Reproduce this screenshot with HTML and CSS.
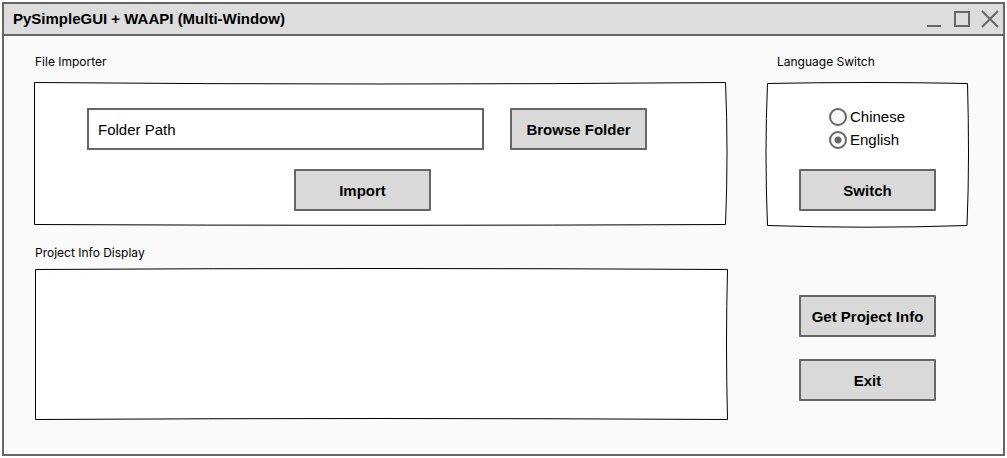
FILE: index.html
```html
<!DOCTYPE html>
<html lang="en">
<head>
<meta charset="utf-8">
<meta name="viewport" content="width=device-width, initial-scale=1">
<title>PySimpleGUI + WAAPI (Multi-Window)</title>
<link rel="stylesheet" href="styles.css">
</head>
<body>
<main class="window">
  <header class="titlebar">
    <h1 class="title">PySimpleGUI + WAAPI (Multi-Window)</h1>
    <div class="controls">
      <button class="control" type="button" aria-label="Minimize"><svg viewBox="0 0 18 18"><path d="M2 16H16"/></svg></button>
      <button class="control" type="button" aria-label="Maximize"><svg viewBox="0 0 18 18"><path d="M2 2H16V16H2Z"/></svg></button>
      <button class="control" type="button" aria-label="Close"><svg viewBox="0 0 18 18"><path d="M1 1L17 17M17 1L1 17"/></svg></button>
    </div>
  </header>
  <div class="content">
    <section class="group">
      <h2 class="label">File Importer</h2>
      <form class="panel importer">
        <svg class="outline" viewBox="0 0 694 143" preserveAspectRatio="none" aria-hidden="true"><path d="M.5 .5Q173 2 346 2Q519 2 691.5 .5Q693 35 693 71Q693 107 691.5 142.5Q519 143.3 346 143.3Q173 143.3 .5 142.5Z"/></svg>
        <div class="row">
          <input class="path" type="text" value="Folder Path" aria-label="Folder Path">
          <button class="button" type="button">Browse Folder</button>
        </div>
        <div class="row row-center">
          <button class="button" type="button">Import</button>
        </div>
      </form>
    </section>
    <section class="group">
      <h2 class="label label-indent">Language Switch</h2>
      <form class="panel language">
        <svg class="outline" viewBox="0 0 202 143" preserveAspectRatio="none" aria-hidden="true"><path d="M1.5 1.5Q51 .5 101 .5Q151 .5 201.5 1.5Q202.5 36 202.5 72Q202.5 108 201 143.5Q151 145.2 101 145.2Q51 145.2 1.5 143.5Q0 108 0 72Q0 36 1.5 1.5Z"/></svg>
        <div class="options">
          <label class="option"><input class="radio" type="radio" name="language">Chinese</label>
          <label class="option"><input class="radio" type="radio" name="language" checked>English</label>
        </div>
        <button class="button" type="button">Switch</button>
      </form>
    </section>
    <section class="group">
      <h2 class="label label-tight">Project Info Display</h2>
      <div class="panel display">
        <svg class="outline" viewBox="0 0 694 152" preserveAspectRatio="none" aria-hidden="true"><path d="M1.5 1.5Q174 .5 347 .5Q520 .5 693.5 1.5Q692.5 38 692.5 76Q692.5 114 693.5 151.5Q520 150.5 347 150.5Q174 150.5 1.5 151.5Z"/></svg>
      </div>
    </section>
    <div class="actions">
      <button class="button" type="button">Get Project Info</button>
      <button class="button" type="button">Exit</button>
    </div>
  </div>
</main>
</body>
</html>
```
FILE: styles.css
```css
* { box-sizing: border-box; }

body {
  margin: 0;
  padding: 2px;
  min-height: 100vh;
  display: flex;
  background: #fff;
  color: #000;
  font: 15px/20px "Liberation Sans", Arial, sans-serif;
}

.window {
  flex: 1;
  display: flex;
  flex-direction: column;
  border: 2px solid #666;
  background: #fafafa;
}

.titlebar {
  display: flex;
  align-items: center;
  justify-content: space-between;
  height: 32px;
  padding: 0 4px 0 9px;
  border-bottom: 2px solid #666;
  background: #ddd;
}

.title {
  margin: 0;
  font-size: 15px;
  line-height: 20px;
}

.controls {
  display: flex;
  gap: 10px;
}

.control {
  width: 18px;
  height: 18px;
  padding: 0;
  border: 0;
  background: none;
}

.control svg {
  display: block;
  fill: none;
  stroke: #666;
  stroke-width: 2;
}

.content {
  flex: 1;
  display: grid;
  grid-template-columns: minmax(0, 1fr) 202px;
  grid-template-rows: auto 1fr;
  gap: 18px 38px;
  padding: 16px 35px 34px 30px;
}

.group {
  display: flex;
  flex-direction: column;
}

.label {
  margin: 0 0 10px 1px;
  font: 400 12px/20px Inter, sans-serif;
}

.label-indent { margin-left: 11px; }

.label-tight { margin-bottom: 5px; }

.panel {
  position: relative;
  flex: 1;
}

.outline {
  position: absolute;
  inset: 0;
  z-index: 0;
  width: 100%;
  height: 100%;
  overflow: visible;
  fill: #fff;
  stroke: #000;
}

.outline path { vector-effect: non-scaling-stroke; }

.row,
.options,
.language .button { position: relative; }

.importer {
  display: flex;
  flex-direction: column;
  gap: 19px;
  padding: 26px 81px 14px 53px;
}

.row {
  display: flex;
  gap: 26px;
}

.row-center {
  justify-content: center;
  padding-right: 9px;
}

.path {
  flex: 1;
  min-width: 0;
  height: 42px;
  padding: 0 9px;
  border: 2px solid #666;
  background: #fff;
  color: #000;
  font: inherit;
}

.button {
  width: 137px;
  height: 42px;
  padding: 2px 0 0;
  border: 2px solid #666;
  border-radius: 1px;
  background: #d9d9d9;
  color: #000;
  font: inherit;
  font-weight: 700;
}

.language { padding: 24px 32px 14px 33px; }

.options {
  display: flex;
  flex-direction: column;
  gap: 1px;
  margin-bottom: 18px;
  padding-left: 30px;
}

.option {
  display: flex;
  align-items: center;
  gap: 3px;
  height: 22px;
}

.radio {
  appearance: none;
  width: 18px;
  height: 18px;
  margin: 0;
  border: 2px solid #666;
  border-radius: 50%;
  background: #fafafa;
}

.radio:checked { background: radial-gradient(circle, #666 3px, #fafafa 4px); }

.display { min-height: 120px; }

.actions {
  display: flex;
  flex-direction: column;
  gap: 22px;
  padding: 52px 32px 0 33px;
}
```
